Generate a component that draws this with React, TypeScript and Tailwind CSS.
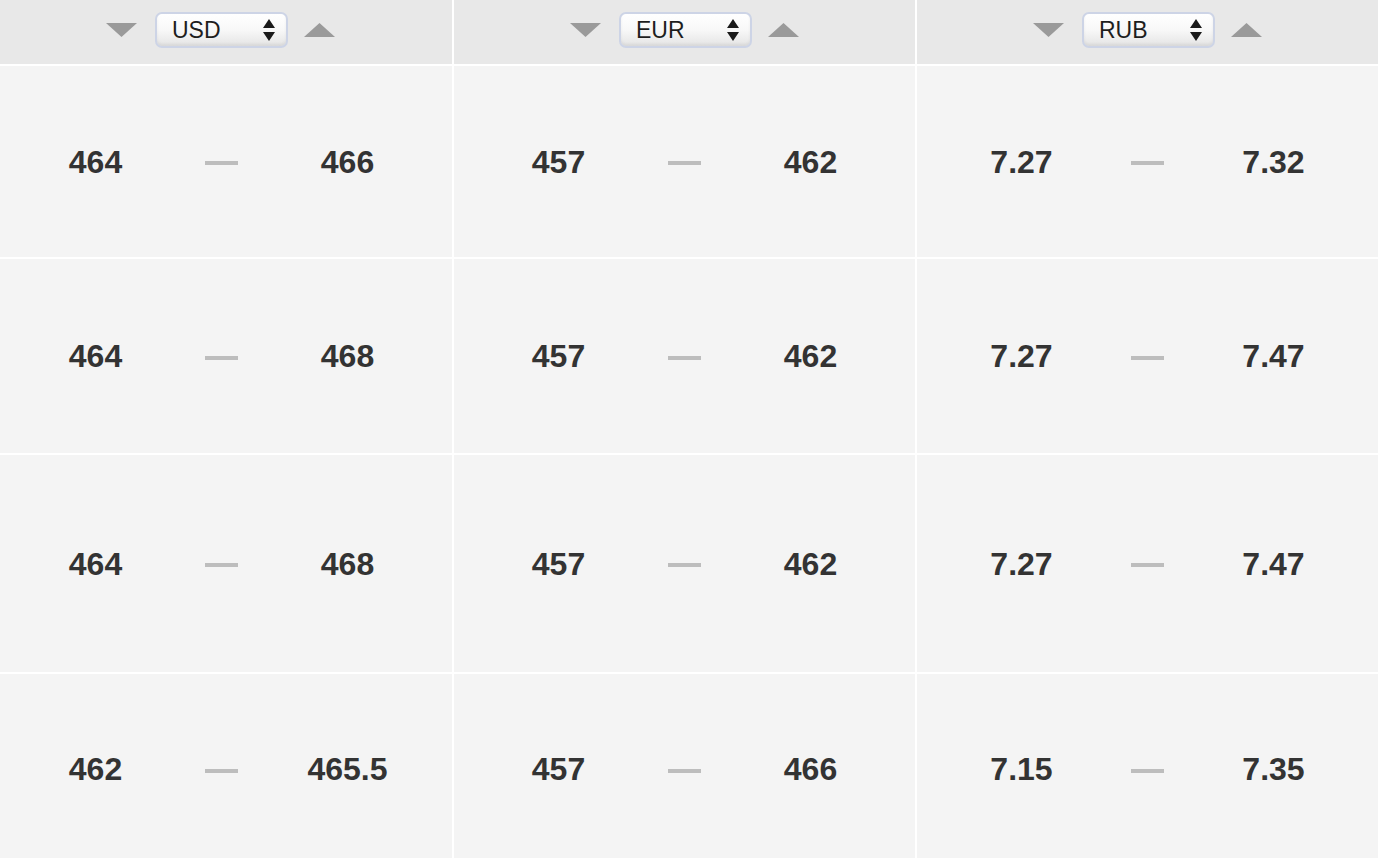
const rates = [
  { pad: 'pr-[9px]', code: 'USD', rows: [['464', '466'], ['464', '468'], ['464', '468'], ['462', '465.5']] },
  { pad: '', code: 'EUR', rows: [['457', '462'], ['457', '462'], ['457', '462'], ['457', '466']] },
  { pad: '', code: 'RUB', rows: [['7.27', '7.32'], ['7.27', '7.47'], ['7.27', '7.47'], ['7.15', '7.35']] },
];

const Tri = ({ up }: { up?: boolean }) => (
  <svg width="31" height="14" viewBox="0 0 31 14" className="block">
    <path d={up ? 'M0 14 L15.5 0 L31 14 Z' : 'M0 0 L31 0 L15.5 14 Z'} fill="#9a9a9a" />
  </svg>
);

const Select = ({ code }: { code: string }) => (
  <div className="w-[133px] h-[36px] rounded-[7px] border-2 border-[#cdd4e6] bg-gradient-to-b from-white via-[#f8f8f8] to-[#e4e4e4] shadow-[inset_0_-2px_3px_rgba(0,0,0,0.06)] flex items-center pl-[15px] pr-[11px]">
    <span className="flex-1 text-[23px] leading-none text-[#1e1e1e]">{code}</span>
    <svg width="12" height="22" viewBox="0 0 12 22" className="block">
      <path d="M0 9 L6 0 L12 9 Z M0 13 L12 13 L6 22 Z" fill="#1a1a1a" />
    </svg>
  </div>
);

export default function App() {
  const rowH = ['h-[191px]', 'h-[194px]', 'h-[217px]', 'h-[190px]'];
  return (
    <div className="w-[1378px] h-[858px] overflow-hidden bg-white font-['Liberation_Sans',Arial,sans-serif]">
      <div className="grid grid-cols-[452px_461px_461px] gap-[2px]">
        {rates.map((c) => (
          <div key={c.code} className={`h-[64px] bg-[#e8e8e8] flex items-center justify-center pb-[4px] ${c.pad} ${c.code === 'USD' ? 'pr-[11px]' : ''}`}>
            <Tri />
            <div className="ml-[18px] mr-[16px]">
              <Select code={c.code} />
            </div>
            <Tri up />
          </div>
        ))}
        {[0, 1, 2, 3].map((r) =>
          rates.map((c) => (
            <div key={c.code + r} className={`${rowH[r]} bg-[#f4f4f4] flex items-center justify-center ${c.pad}`}>
              <span className="w-[126px] text-center text-[32px] font-bold text-[#333]">{c.rows[r][0]}</span>
              <span className="w-[126px] flex justify-center pt-[3px]">
                <span className="block w-[33px] h-[4px] bg-[#bdbdbd]" />
              </span>
              <span className="w-[126px] text-center text-[32px] font-bold text-[#333]">{c.rows[r][1]}</span>
            </div>
          ))
        )}
      </div>
    </div>
  );
}
